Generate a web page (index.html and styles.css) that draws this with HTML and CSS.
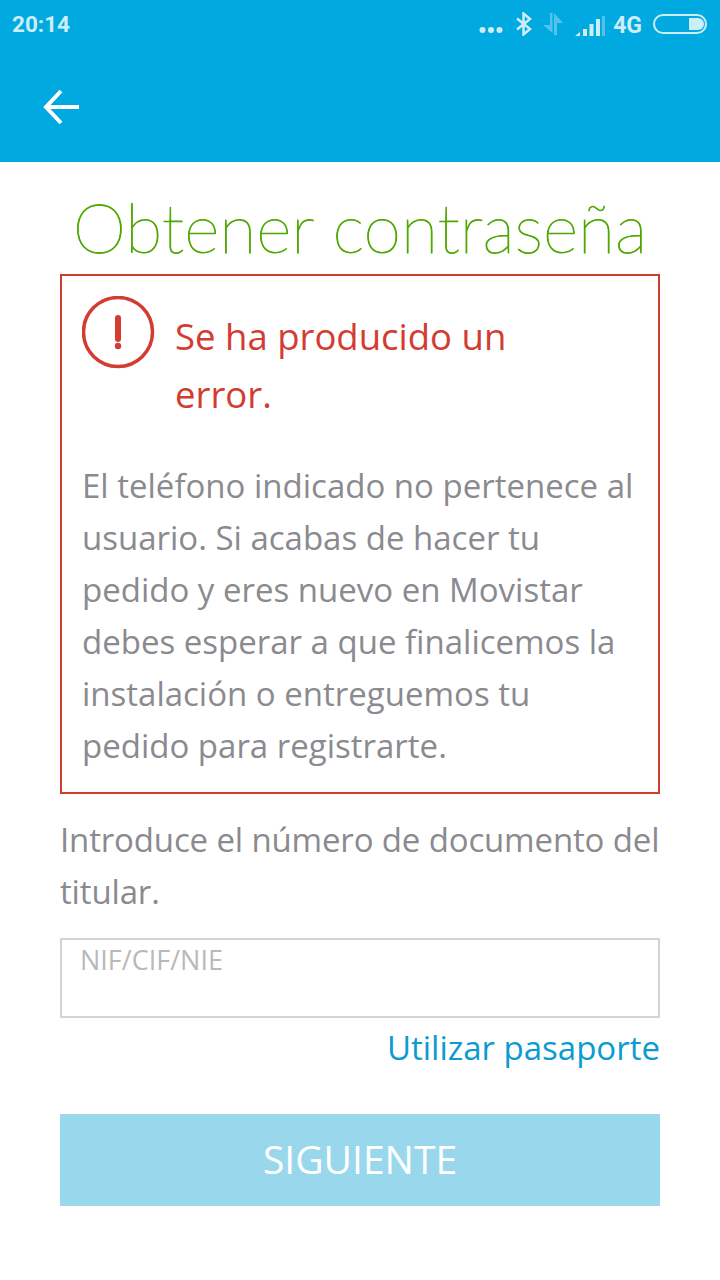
FILE: index.html
```html
<!DOCTYPE html>
<html lang="es">
<head>
<meta charset="utf-8">
<title>Obtener contraseña</title>
<link rel="stylesheet" href="styles.css">
</head>
<body>
<header class="appbar">
  <div class="status">
    <span class="time">20:14</span>
    <div class="status-icons">
      <svg class="dots" width="24" height="8" viewBox="0 0 24 8"><circle cx="3.5" cy="4" r="3" /><circle cx="12" cy="4" r="3" /><circle cx="20.5" cy="4" r="3" /></svg>
      <svg class="bt" width="18" height="24" viewBox="0 0 18 24"><path d="M2 6.500 15 17 8.500 22.500V1.500L15 7 2 17.500" /></svg>
      <svg class="arrows" width="20" height="22" viewBox="0 0 20 22"><path d="M7 0h2.500v20L0 12h7z" /><path d="M11 22V0l9 10h-6v12z" /></svg>
      <svg class="signal" width="30" height="20" viewBox="0 0 30 20"><path d="M0 20 5 16V20z" /><path d="M8 13h4v7H8z" /><path d="M14.500 8h4v12h-4z" /><path d="M21 3h4v17h-4z" /><path class="dim" d="M27 0h3v20h-3z" /></svg>
      <span class="net">4G</span>
      <svg class="battery" width="54" height="20" viewBox="0 0 54 20"><rect x="1" y="1" width="52" height="18" rx="9" /><path class="charge" d="M36 4h9a6 6 0 0 1 6 6 6 6 0 0 1-6 6h-9z" /></svg>
    </div>
  </div>
  <div class="toolbar">
    <svg class="back" width="36" height="36" viewBox="0 0 36 36"><path d="M36 18H3M18 2 3 18l15 16" /></svg>
  </div>
</header>
<main class="content">
  <h1 class="title">Obtener contraseña</h1>
  <section class="error-box">
    <div class="error-head">
      <svg class="error-icon" width="74" height="74" viewBox="0 0 74 74"><circle cx="36" cy="36" r="34.500" /><path d="M36 22v21" /><circle class="dot" cx="36" cy="50" r="3.200" /></svg>
      <p class="error-title">Se ha producido un error.</p>
    </div>
    <p class="error-text">El teléfono indicado no pertenece al usuario. Si acabas de hacer tu pedido y eres nuevo en Movistar debes esperar a que finalicemos la instalación o entreguemos tu pedido para registrarte.</p>
  </section>
  <p class="intro">Introduce el número de documento del titular.</p>
  <div class="field"><span class="placeholder">NIF/CIF/NIE</span></div>
  <a class="link">Utilizar pasaporte</a>
  <button class="next">SIGUIENTE</button>
</main>
</body>
</html>
```
FILE: styles.css
```css
* { box-sizing: border-box; }
html, body { margin: 0; padding: 0; }
body {
  width: 720px;
  height: 1280px;
  background: #fff;
  font-family: "Open Sans", "Noto Sans", sans-serif;
  overflow: hidden;
}
.appbar { height: 162px; background: #00a9e0; display: flex; flex-direction: column; }
.status {
  height: 48px;
  display: flex;
  align-items: center;
  justify-content: space-between;
  padding: 0 13px 0 12px;
  color: #cdeef9;
}
.time { font: 700 22.500px/28px Roboto, sans-serif; }
.status-icons { display: flex; align-items: center; gap: 10px; }
.status-icons svg { display: block; fill: #cdeef9; }
.dots { margin-top: 11px; margin-right: 4px; }
.status-icons .bt { fill: none; stroke: #cdeef9; stroke-width: 2.500; margin-left: -2px; }
.status-icons .arrows { fill: #55c3e9; margin-left: 0; }
.signal { margin-top: 3px; margin-left: 2px; }
.signal .dim { fill: #55c3e9; }
.net { font: 700 23px/28px Roboto, sans-serif; margin: 3px 0 0 -2px; }
.status-icons .battery { fill: none; margin-left: 1px; margin-top: 0; }
.battery rect { stroke: #cdeef9; stroke-width: 2; }
.status-icons .battery .charge { fill: #cdeef9; }
.toolbar { flex: 1; display: flex; align-items: center; padding: 0 0 0 43px; }
.back { display: block; fill: none; stroke: #fff; stroke-width: 4; margin-top: 4px; }
.content { padding: 0 60px; display: flex; flex-direction: column; }
.title {
  margin: 22px -10px 0 -10px;
  height: 90px;
  text-align: center;
  font-family: Lato, sans-serif;
  font-size: 68px;
  line-height: 86px;
  font-weight: 100;
  -webkit-text-stroke: 0.9px #4fa800;
  color: #4fa800;
  white-space: nowrap;
}
.error-box { height: 520px; border: 2px solid #d23c31; padding: 20px 20px 0; }
.error-head { display: flex; gap: 19px; align-items: flex-start; }
.error-icon { display: block; flex: none; fill: none; stroke: #d23c31; stroke-width: 3.500; }
.error-icon path { stroke-width: 6; stroke-linecap: round; }
.error-icon .dot { fill: #d23c31; stroke: none; }
.error-title { margin: 11px 0 0; width: 370px; font-size: 36.500px; line-height: 58px; color: #d23c31; }
.error-text { margin: 37px 0 0; font-size: 33px; line-height: 52px; color: #8a8a8f; }
.intro { margin: 20px 0 0; font-size: 33px; line-height: 52px; letter-spacing: -0.15px; color: #8a8a8f; }
.field { height: 80px; margin-top: 20px; border: 2px solid #d4d4d4; padding: 3px 18px; }
.placeholder { display: block; font-size: 27px; line-height: 34px; color: #b9b9b9; }
.link { align-self: flex-end; margin-top: 5px; font-size: 33px; line-height: 50px; color: #0a9ccf; }
.next {
  height: 92px;
  margin-top: 41px;
  padding: 0 0 4px;
  border: 0;
  background: #99d8ec;
  color: #fff;
  font-family: inherit;
  font-size: 39px;
  font-weight: 400;
}
```
